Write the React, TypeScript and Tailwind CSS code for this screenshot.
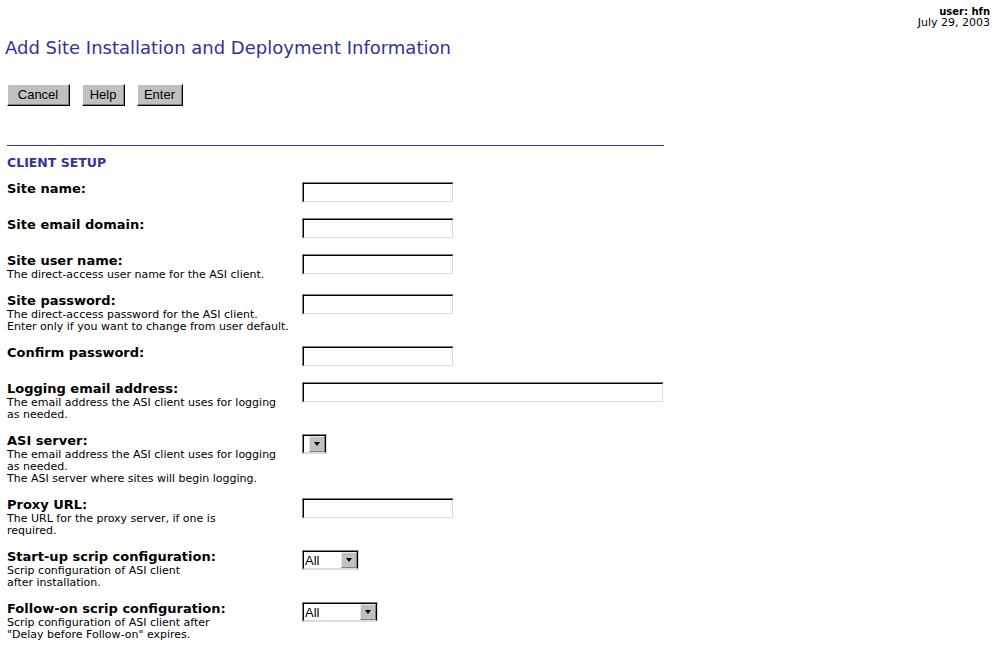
import React from "react";

const V = { fontFamily: '"DejaVu Sans", Verdana, sans-serif' };
const A = { fontFamily: '"Liberation Sans", Arial, sans-serif' };

function Btn({ label, w }: { label: string; w: string }) {
  return (
    <div
      className={`${w} h-[22px] border-t border-l border-white border-b border-r border-b-black border-r-black bg-[#c0c0c0]`}
    >
      <div
        className="h-full w-full border-b border-r border-[#808080] flex items-center justify-center text-[13px] text-black"
        style={A}
      >
        {label}
      </div>
    </div>
  );
}

function TextBox({ w }: { w: string }) {
  return (
    <div className={`${w} h-[21px] border-t border-l border-[#808080] border-b border-r border-b-white border-r-white`}>
      <div className="h-full w-full bg-white border-t border-l border-black border-b border-r border-b-[#dcdcdc] border-r-[#dcdcdc]" />
    </div>
  );
}

function Select({ w, value }: { w: string; value?: string }) {
  return (
    <div className={`${w} h-[20px] border-t border-l border-[#808080] border-b border-r border-b-[#dcdcdc] border-r-[#dcdcdc]`}>
      <div className="h-full w-full flex bg-white border-t border-l border-black border-b border-r border-b-[#dcdcdc] border-r-black">
        <div className="flex-1 flex items-center pl-[1px] text-[13px] text-black leading-none" style={A}>
          {value}
        </div>
        <div className="w-[16px] h-full bg-[#c0c0c0] border-t border-l border-[#e8e8e8] border-b border-r border-b-[#808080] border-r-[#808080] flex items-center justify-center">
          <div className="w-0 h-0 border-l-[3.5px] border-r-[3.5px] border-t-[4px] border-l-transparent border-r-transparent border-t-black" />
        </div>
      </div>
    </div>
  );
}

function Row({ label, desc = [], children }: { label: string; desc?: string[]; children: React.ReactNode }) {
  return (
    <div className="flex items-start pb-3">
      <div className="w-[295px] min-h-[24px] shrink-0">
        <div className="text-[13px] leading-[16px] font-bold text-black whitespace-nowrap" style={V}>
          {label}
        </div>
        {desc.map((d, i) => (
          <div key={i} className="text-[11px] leading-[12px] text-black whitespace-nowrap" style={V}>
            {d}
          </div>
        ))}
      </div>
      <div className="pt-[1px]">{children}</div>
    </div>
  );
}

export default function App() {
  return (
    <div className="w-[1000px] h-[651px] bg-white overflow-hidden relative" style={V}>
      <div className="flex flex-col items-end pt-[6px] pr-[10px]">
        <div className="text-[10px] leading-[11px] font-bold text-black">user: hfn</div>
        <div className="text-[11px] leading-[11px] text-black">July 29, 2003</div>
      </div>
      <h1 className="pl-[5px] mt-[9px] text-[18px] leading-[22px] text-[#333399] font-normal whitespace-nowrap">
        Add Site Installation and Deployment Information
      </h1>
      <div className="flex gap-[12px] pl-[7px] mt-[25px]">
        <Btn label="Cancel" w="w-[63px]" />
        <Btn label="Help" w="w-[43px]" />
        <Btn label="Enter" w="w-[46px]" />
      </div>
      <div className="ml-[7px] w-[657px] h-[1px] bg-[#333399] mt-[39px]" />
      <div className="pl-[7px] mt-[9px] text-[12.5px] leading-[15px] font-bold text-[#333399]">CLIENT SETUP</div>
      <div className="pl-[7px] mt-[11px]">
        <Row label="Site name:">
          <TextBox w="w-[152px]" />
        </Row>
        <Row label="Site email domain:">
          <TextBox w="w-[152px]" />
        </Row>
        <Row label="Site user name:" desc={["The direct-access user name for the ASI client."]}>
          <TextBox w="w-[152px]" />
        </Row>
        <Row
          label="Site password:"
          desc={["The direct-access password for the ASI client.", "Enter only if you want to change from user default."]}
        >
          <TextBox w="w-[152px]" />
        </Row>
        <Row label="Confirm password:">
          <TextBox w="w-[152px]" />
        </Row>
        <Row
          label="Logging email address:"
          desc={["The email address the ASI client uses for logging", "as needed."]}
        >
          <TextBox w="w-[362px]" />
        </Row>
        <Row
          label="ASI server:"
          desc={[
            "The email address the ASI client uses for logging",
            "as needed.",
            "The ASI server where sites will begin logging.",
          ]}
        >
          <Select w="w-[25px]" />
        </Row>
        <Row label="Proxy URL:" desc={["The URL for the proxy server, if one is", "required."]}>
          <TextBox w="w-[152px]" />
        </Row>
        <Row label="Start-up scrip configuration:" desc={["Scrip configuration of ASI client", "after installation."]}>
          <Select w="w-[57px]" value="All" />
        </Row>
        <Row
          label="Follow-on scrip configuration:"
          desc={["Scrip configuration of ASI client after", '"Delay before Follow-on" expires.']}
        >
          <Select w="w-[76px]" value="All" />
        </Row>
      </div>
    </div>
  );
}
